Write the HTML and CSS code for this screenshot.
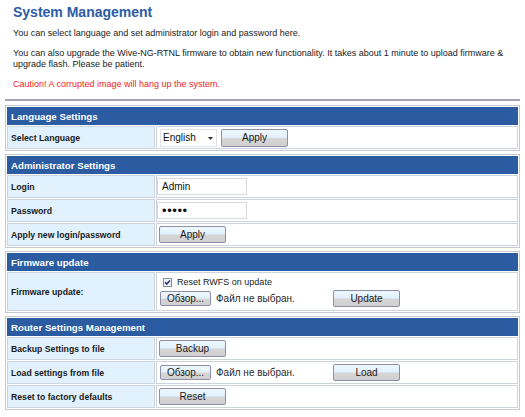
FILE: index.html
```html
<!DOCTYPE html>
<html lang="en">
<head>
<meta charset="utf-8">
<title>System Management</title>
<link rel="stylesheet" href="styles.css">
</head>
<body>
<div class="page">
  <h1 class="title">System Management</h1>
  <p class="intro">You can select language and set administrator login and password here.</p>
  <p class="intro">You can also upgrade the Wive-NG-RTNL firmware to obtain new functionality. It takes about 1 minute to upload firmware &amp; upgrade flash. Please be patient.</p>
  <p class="intro caution">Caution! A corrupted image will hang up the system.</p>
  <hr class="rule">

  <table class="settings">
    <tr><td class="head" colspan="2">Language Settings</td></tr>
    <tr>
      <td class="label">Select Language</td>
      <td class="value">
        <span class="select-wrap">
          <select class="select"><option>English</option></select>
          <svg class="select-arrow" width="5" height="3" viewBox="0 0 5 3"><path d="M0 0h5L2.5 3z" fill="#333"/></svg>
        </span><button class="btn btn-wide btn-apply-lang" type="button">Apply</button>
      </td>
    </tr>
  </table>

  <table class="settings">
    <tr><td class="head" colspan="2">Administrator Settings</td></tr>
    <tr>
      <td class="label">Login</td>
      <td class="value"><input class="field" type="text" value="Admin"></td>
    </tr>
    <tr>
      <td class="label">Password</td>
      <td class="value"><input class="field field-pass" type="password" value="admin"></td>
    </tr>
    <tr>
      <td class="label">Apply new login/password</td>
      <td class="value"><button class="btn btn-wide" type="button">Apply</button></td>
    </tr>
  </table>

  <table class="settings">
    <tr><td class="head" colspan="2">Firmware update</td></tr>
    <tr>
      <td class="label label-tall">Firmware update:</td>
      <td class="value">
        <div class="stack">
          <label class="check">
            <svg class="check-box" width="9" height="9" viewBox="0 0 9 9"><rect x="0.5" y="0.5" width="8" height="8" fill="#f4f6fa" stroke="#7f8fa8"/><path d="M2 4.3l1.7 1.8 3.3-3.7" fill="none" stroke="#21357a" stroke-width="1.5"/></svg>
            <span>Reset RWFS on update</span>
          </label>
          <div class="file-line">
            <span class="file"><button class="btn btn-browse" type="button">Обзор...</button><span class="file-name">Файл не выбран.</span></span><button class="btn btn-wide" type="button">Update</button>
          </div>
        </div>
      </td>
    </tr>
  </table>

  <table class="settings">
    <tr><td class="head" colspan="2">Router Settings Management</td></tr>
    <tr>
      <td class="label">Backup Settings to file</td>
      <td class="value"><button class="btn btn-wide" type="button">Backup</button></td>
    </tr>
    <tr>
      <td class="label">Load settings from file</td>
      <td class="value">
        <span class="file"><button class="btn btn-browse" type="button">Обзор...</button><span class="file-name">Файл не выбран.</span></span><button class="btn btn-wide" type="button">Load</button>
      </td>
    </tr>
    <tr>
      <td class="label">Reset to factory defaults</td>
      <td class="value"><button class="btn btn-wide" type="button">Reset</button></td>
    </tr>
  </table>
</div>
</body>
</html>
```

FILE: styles.css
```css
* { box-sizing: border-box; }

body {
  margin: 0;
  background: #ffffff;
  font-family: "Liberation Sans", Arial, sans-serif;
  font-size: 9px;
  color: #1a1a1a;
}

.page {
  padding: 4px 0 0 0;
}

.title {
  margin: 0 0 0 13px;
  font-size: 14px;
  line-height: 17px;
  font-weight: bold;
  color: #2c5ca6;
}

.intro {
  margin: 7px 13px 0 13px;
  line-height: 11px;
}

.intro + .intro { margin-top: 9px; }

.caution {
  color: #ee1c25;
}

.intro + .caution { margin-top: 9px; }

.rule {
  margin: 9px 5px 0 5px;
  height: 2px;
  border: 0;
  background: #a6a2b6;
}

.settings {
  width: 515px;
  margin: 3px 0 0 5px;
  border: 1px solid #c4c9d3;
  border-collapse: separate;
  border-spacing: 1px;
}

.rule + .settings { margin-top: 4px; }

.settings td {
  border: 1px solid #ccd4de;
  padding: 0;
  vertical-align: middle;
}

.settings .head {
  height: 18px;
  padding-left: 3px;
  background: #2b5ba0;
  border-color: #2b5ba0;
  color: #ffffff;
  font-size: 9.7px;
  font-weight: bold;
}

.settings .label {
  width: 148px;
  height: 23px;
  padding-left: 3px;
  background: #e1f1fd;
  font-size: 8.7px;
  font-weight: bold;
}

.settings .label-tall { height: 39px; }

.settings .value {
  background: #ffffff;
}

.select-wrap {
  position: relative;
  display: inline-block;
  vertical-align: middle;
  margin-left: 3px;
}

.select {
  -webkit-appearance: none;
  appearance: none;
  display: block;
  width: 57px;
  height: 18px;
  padding: 0 0 0 2px;
  border: 1px solid #e2e2e2;
  background: #ffffff;
  font-family: "Liberation Sans", Arial, sans-serif;
  font-size: 10px;
  color: #111;
  border-radius: 0;
}

.select-arrow {
  position: absolute;
  right: 4px;
  top: 8px;
}

.btn {
  display: inline-block;
  vertical-align: middle;
  height: 17px;
  padding: 0;
  border: 1px solid #8f8ea8;
  border-radius: 2px;
  background: linear-gradient(#eef7fe 0%, #e3f1fc 45%, #d5d5d5 55%, #d0d0d0 100%);
  font-family: "Liberation Sans", Arial, sans-serif;
  font-size: 10px;
  color: #1a1a1a;
  line-height: 15px;
}

.btn-wide {
  width: 67px;
  margin-left: 2px;
}

.btn-apply-lang {
  margin-left: 4px;
  height: 18px;
}

.field {
  display: inline-block;
  vertical-align: middle;
  width: 90px;
  height: 17px;
  margin-left: 0;
  padding: 0 0 0 4px;
  border: 1px solid #d8d8d8;
  background: #ffffff;
  font-family: "Liberation Sans", Arial, sans-serif;
  font-size: 10px;
  color: #111;
  outline: none;
}

.field-pass {
  font-size: 13px;
  letter-spacing: 0.6px;
}

.stack {
  display: flex;
  flex-direction: column;
  gap: 2px;
}

.check {
  display: flex;
  align-items: center;
  gap: 5px;
  margin-left: 6px;
  height: 12px;
}

.file-line {
  display: flex;
  align-items: center;
}

.file {
  display: inline-flex;
  align-items: center;
  width: 174px;
  vertical-align: middle;
}

.btn-browse {
  width: 51px;
  height: 15px;
  line-height: 13px;
  margin-left: 3px;
}

.file-name {
  margin-left: 5px;
  font-size: 10px;
  color: #2a2a2a;
}
```
